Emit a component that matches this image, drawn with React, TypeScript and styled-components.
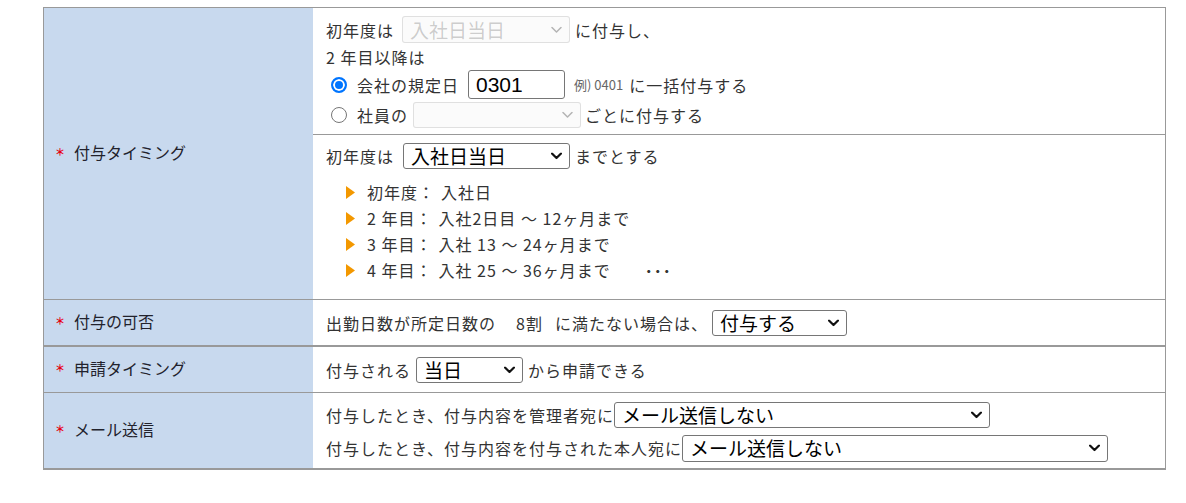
import React from "react";
import styled, { createGlobalStyle } from "styled-components";

const GlobalStyle = createGlobalStyle`
  html, body { margin: 0; padding: 0; background: #fff; }
  body { font-family: "Noto Sans CJK JP", "Noto Sans", sans-serif; color: #333; }
  * { box-sizing: border-box; }
`;

const Page = styled.div`
  padding: 7px 0 0 43px;
`;

const Form = styled.div`
  width: 1123px;
  border: 1px solid #999;
  border-bottom-width: 2px;
`;

const Row = styled.div<{ $sep?: number }>`
  display: grid;
  grid-template-columns: 269px 1fr;
  border-top: ${(p) => p.$sep ?? 0}px solid #999;
`;

const Label = styled.div`
  display: flex;
  align-items: center;
  background: #c8d9ee;
  padding: 0 0 3px 11px;
  font-size: 16px;
  color: #22222c;
  white-space: nowrap;
`;

const Required = styled.span`
  color: #e60012;
  font-size: 10px;
  font-weight: bold;
  margin-right: 9px;
  line-height: 1;
`;

const Value = styled.div<{ $h?: number; $center?: boolean; $pt?: number; $gap?: number }>`
  display: flex;
  flex-direction: column;
  justify-content: ${(p) => (p.$center ? "center" : "flex-start")};
  gap: ${(p) => p.$gap ?? 0}px;
  ${(p) => (p.$h ? `height: ${p.$h}px;` : "")}
  padding: ${(p) => p.$pt ?? 0}px 12px 0 13px;
`;

const Section = styled.div<{ $h: number; $pt: number; $divider?: boolean }>`
  height: ${(p) => p.$h}px;
  padding: ${(p) => p.$pt}px 12px 0 13px;
  border-top: ${(p) => (p.$divider ? "1px solid #999" : "none")};
`;

const Stack = styled.div`
  display: flex;
  flex-direction: column;
`;

const Line = styled.div<{ $h: number; $mt?: number }>`
  display: flex;
  align-items: center;
  height: ${(p) => p.$h}px;
  margin-top: ${(p) => p.$mt ?? 0}px;
  font-size: 16px;
  letter-spacing: 1px;
  color: #333;
  white-space: nowrap;
`;

const SelectBox = styled.span<{ $w: number; $h?: number; $ml?: number; $mr?: number }>`
  position: relative;
  display: inline-flex;
  flex: none;
  width: ${(p) => p.$w}px;
  height: ${(p) => p.$h ?? 26}px;
  margin: 0 ${(p) => p.$mr ?? 5}px 0 ${(p) => p.$ml ?? 5}px;
  letter-spacing: 0;
`;

const NativeSelect = styled.select`
  appearance: none;
  -webkit-appearance: none;
  width: 100%;
  height: 100%;
  margin: 0;
  padding: 0 24px 0 7px;
  font-family: "Noto Sans CJK JP", sans-serif;
  font-size: 19px;
  line-height: 22px;
  color: #000;
  background: #fff;
  border: 1px solid #767676;
  border-radius: 3px;
  &:disabled {
    color: rgba(16, 16, 16, 0.3);
    border-color: rgba(118, 118, 118, 0.3);
    background: rgba(239, 239, 239, 0.3);
  }
`;

const Chevron = styled.svg<{ $disabled?: boolean }>`
  position: absolute;
  right: 8px;
  top: 50%;
  transform: translateY(-50%);
  pointer-events: none;
  stroke: ${(p) => (p.$disabled ? "rgba(16,16,16,0.3)" : "#111")};
  stroke-width: ${(p) => (p.$disabled ? 1.5 : 2.2)};
  fill: none;
`;

type SelectProps = {
  w: number;
  h?: number;
  ml?: number;
  mr?: number;
  disabled?: boolean;
  value: string;
};

const Select = ({ w, h, ml, mr, disabled, value }: SelectProps) => (
  <SelectBox $w={w} $h={h} $ml={ml} $mr={mr}>
    <NativeSelect disabled={disabled} defaultValue="v">
      <option value="v">{value}</option>
    </NativeSelect>
    <Chevron $disabled={disabled} width="11" height="7" viewBox="0 0 11 7">
      <polyline points="1,1 5.5,5.5 10,1" strokeLinecap="round" strokeLinejoin="round" />
    </Chevron>
  </SelectBox>
);

const CodeInput = styled.input`
  width: 97px;
  height: 29px;
  margin: 0 9px 0 9px;
  padding: 0 7px;
  border: 1px solid #767676;
  border-radius: 3px;
  font-family: "Liberation Sans", Arial, sans-serif;
  font-size: 21px;
  letter-spacing: 0;
  color: #000;
  background: #fff;
`;

const Radio = styled.input`
  appearance: none;
  -webkit-appearance: none;
  width: 16px;
  height: 16px;
  margin: 0 10px 0 5px;
  flex: none;
  border-radius: 50%;
  border: 1px solid #767676;
  background: #fff;
  &:checked {
    border: 2px solid #0075ff;
    background: #0075ff;
    box-shadow: inset 0 0 0 2px #fff;
  }
`;

const Example = styled.span`
  font-size: 13px;
  color: #666;
  letter-spacing: 0;
  margin-right: 6px;
`;

const Ratio = styled.span`
  margin: 0 12px 0 20px;
`;

const Steps = styled.ul`
  list-style: none;
  margin: 9px 0 0 20px;
  padding: 0;
`;

const Step = styled.li`
  display: flex;
  align-items: center;
  height: 26px;
  font-size: 16px;
  letter-spacing: 1px;
  color: #333;
  white-space: nowrap;
`;

const BulletIcon = styled.svg`
  flex: none;
  margin-right: 12px;
`;

const Term = styled.span`
  margin-right: 6px;
`;

const Dots = styled.span`
  margin-left: 34px;
  font-weight: bold;
  letter-spacing: 1px;
`;

const Bullet = () => (
  <BulletIcon width="9" height="13" viewBox="0 0 9 13">
    <polygon points="0,0 9,6.5 0,13" fill="#f39800" />
  </BulletIcon>
);

const steps = [
  { term: "初年度：", desc: "入社日" },
  { term: "2 年目：", desc: "入社2日目 〜 12ヶ月まで" },
  { term: "3 年目：", desc: "入社 13 〜 24ヶ月まで" },
  { term: "4 年目：", desc: "入社 25 〜 36ヶ月まで", more: true },
];

export default function App() {
  return (
    <>
      <GlobalStyle />
      <Page>
        <Form>
          <Row>
            <Label>
              <Required>＊</Required>付与タイミング
            </Label>
            <Stack>
              <Section $h={126} $pt={7}>
                <Line $h={29}>
                  初年度は
                  <Select w={168} h={27} ml={8} disabled value="入社日当日" />
                  に付与し、
                </Line>
                <Line $h={26}>2 年目以降は</Line>
                <Line $h={29}>
                  <Radio type="radio" name="grant" defaultChecked />
                  会社の規定日
                  <CodeInput type="text" defaultValue="0301" />
                  <Example>例) 0401</Example>
                  に一括付与する
                </Line>
                <Line $h={28} $mt={2}>
                  <Radio type="radio" name="grant" />
                  社員の
                  <Select w={168} ml={5} mr={4} disabled value="" />
                  ごとに付与する
                </Line>
              </Section>
              <Section $h={165} $pt={7} $divider>
                <Line $h={28}>
                  初年度は
                  <Select w={167} ml={9} value="入社日当日" />
                  までとする
                </Line>
                <Steps>
                  {steps.map((s) => (
                    <Step key={s.term}>
                      <Bullet />
                      <Term>{s.term}</Term>
                      {s.desc}
                      {s.more && <Dots>･･･</Dots>}
                    </Step>
                  ))}
                </Steps>
              </Section>
            </Stack>
          </Row>
          <Row $sep={1}>
            <Label>
              <Required>＊</Required>付与の可否
            </Label>
            <Value $h={45} $center>
              <Line $h={28}>
                出勤日数が所定日数の<Ratio>8割</Ratio>に満たない場合は、
                <Select w={135} ml={4} value="付与する" />
              </Line>
            </Value>
          </Row>
          <Row $sep={2}>
            <Label>
              <Required>＊</Required>申請タイミング
            </Label>
            <Value $h={45} $center>
              <Line $h={28}>
                付与される
                <Select w={107} value="当日" />
                から申請できる
              </Line>
            </Value>
          </Row>
          <Row $sep={1}>
            <Label>
              <Required>＊</Required>メール送信
            </Label>
            <Value $h={75} $pt={8} $gap={5}>
              <Line $h={28}>
                付与したとき、付与内容を管理者宛に
                <Select w={376} ml={0} value="メール送信しない" />
              </Line>
              <Line $h={28}>
                付与したとき、付与内容を付与された本人宛に
                <Select w={426} h={27} ml={0} value="メール送信しない" />
              </Line>
            </Value>
          </Row>
        </Form>
      </Page>
    </>
  );
}
